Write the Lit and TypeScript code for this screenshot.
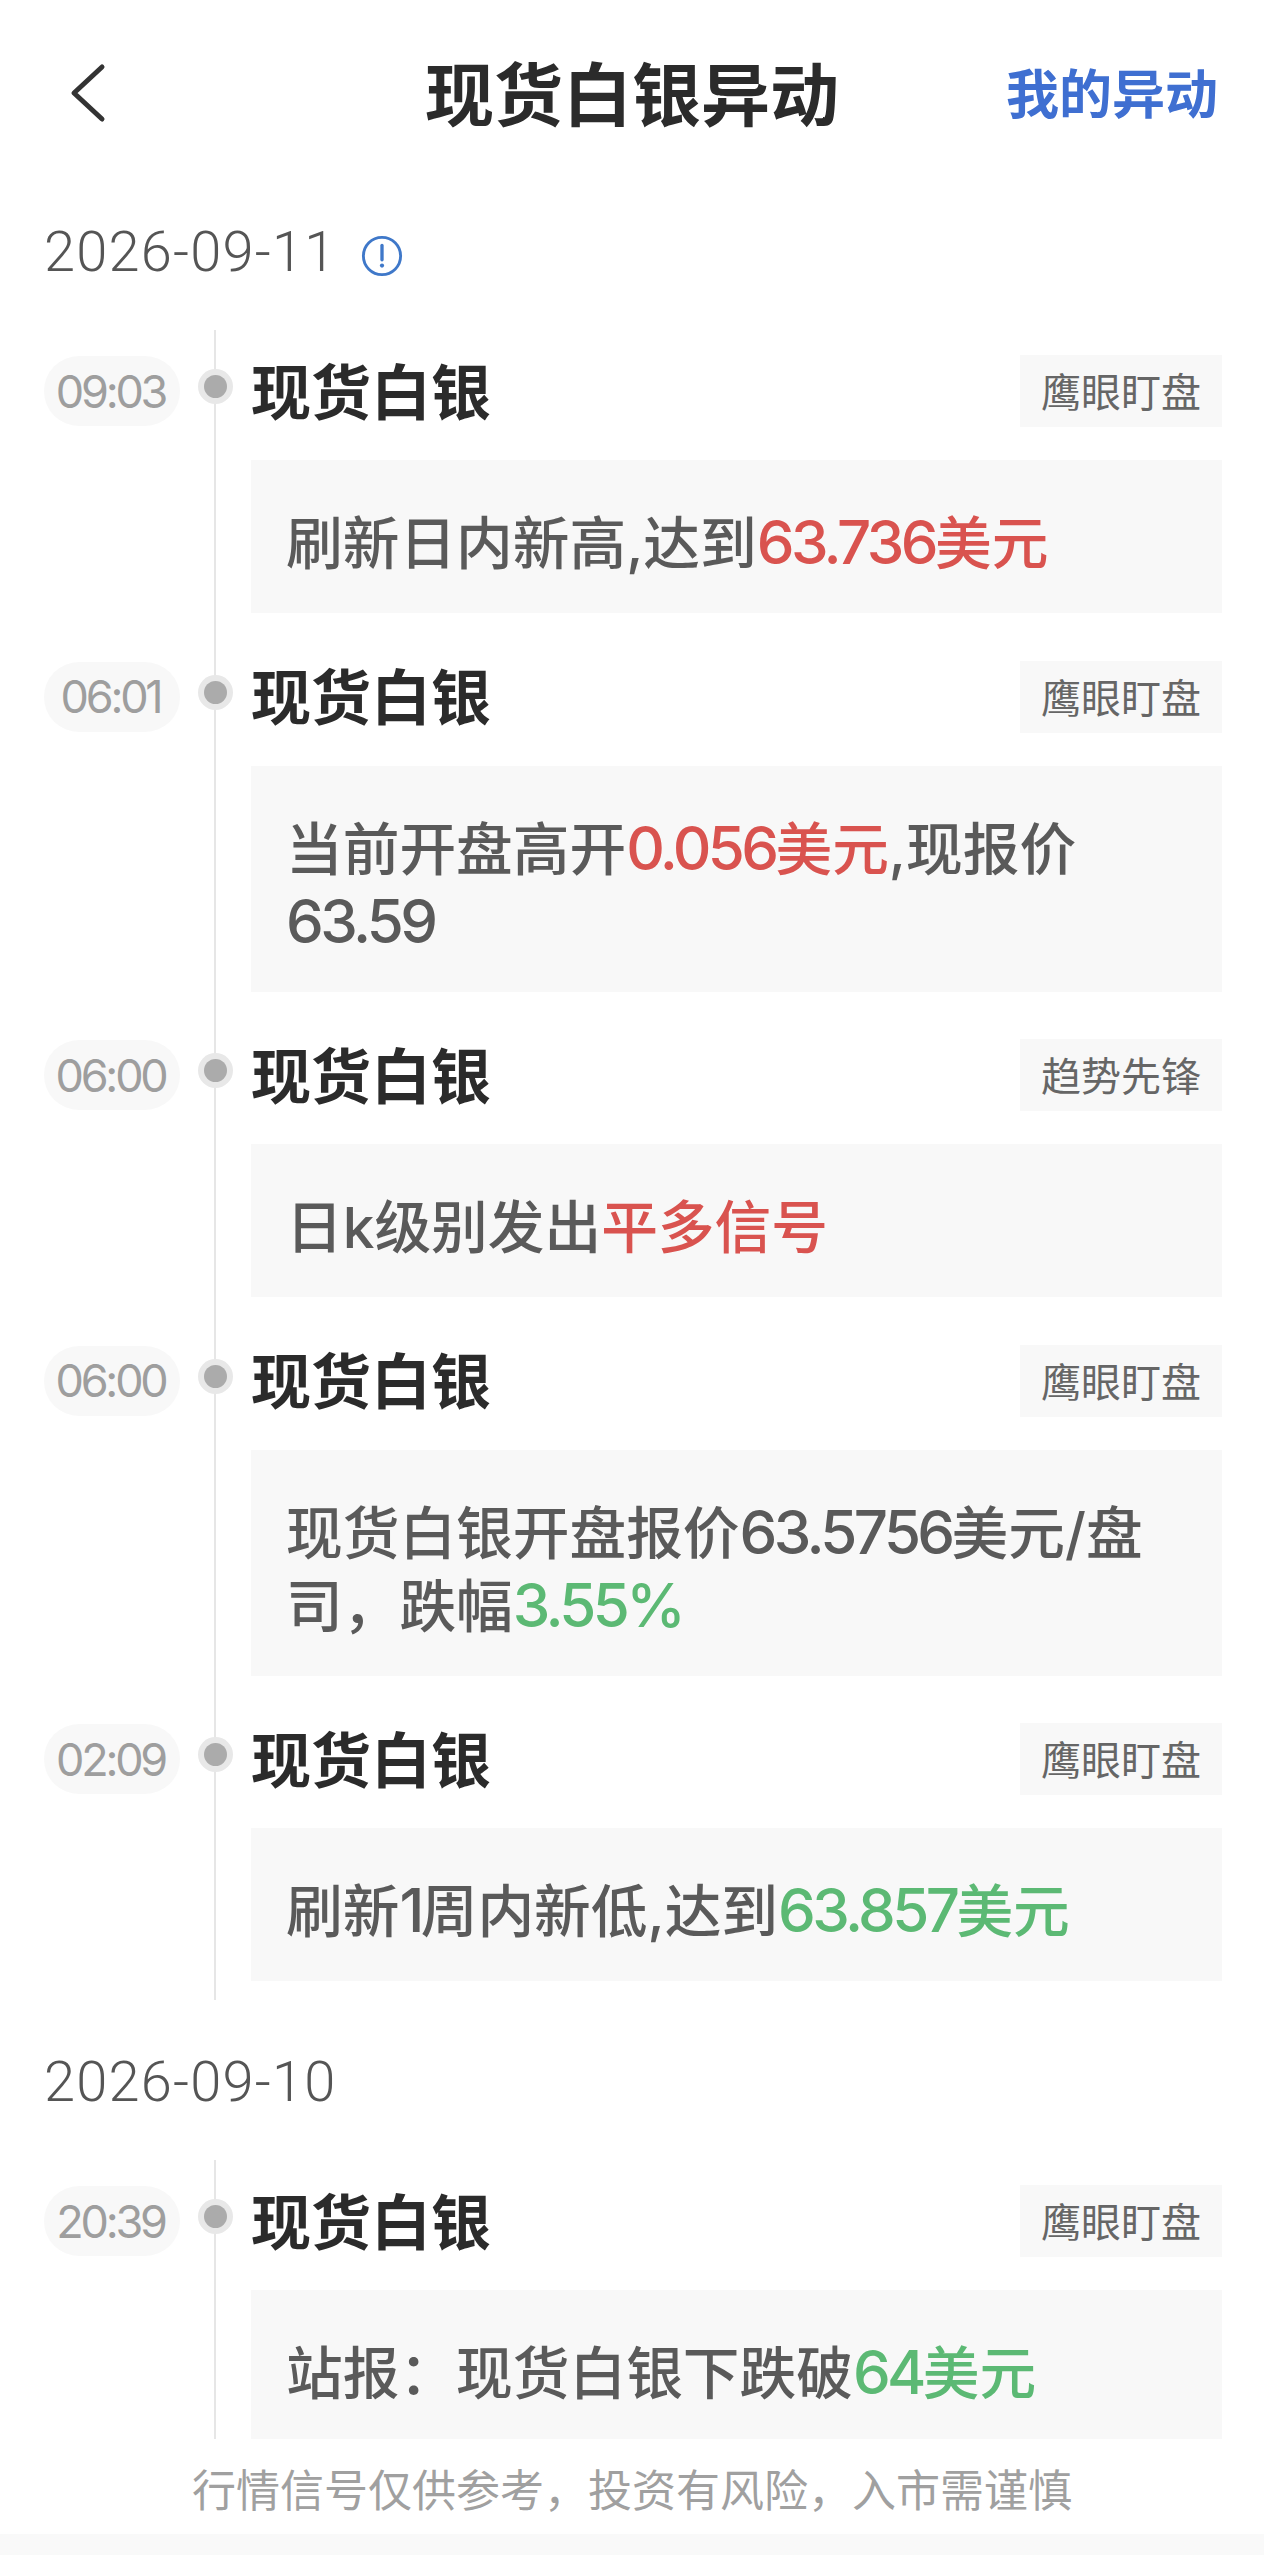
import { LitElement, html, css } from 'lit';
import { customElement } from 'lit/decorators.js';

type Part = { t: string; c?: 'up' | 'down' };
type Item = { time: string; tag: string; body: Part[] };

const day1: Item[] = [
	{ time: '09:03', tag: '鹰眼盯盘', body: [{ t: '刷新日内新高,达到' }, { t: '63.736美元', c: 'up' }] },
	{ time: '06:01', tag: '鹰眼盯盘', body: [{ t: '当前开盘高开' }, { t: '0.056美元', c: 'up' }, { t: ',现报价63.59' }] },
	{ time: '06:00', tag: '趋势先锋', body: [{ t: '日k级别发出' }, { t: '平多信号', c: 'up' }] },
	{ time: '06:00', tag: '鹰眼盯盘', body: [{ t: '现货白银开盘报价63.5756美元/盘司，跌幅' }, { t: '3.55%', c: 'down' }] },
	{ time: '02:09', tag: '鹰眼盯盘', body: [{ t: '刷新1周内新低,达到' }, { t: '63.857美元', c: 'down' }] },
];

const day2: Item[] = [
	{ time: '20:39', tag: '鹰眼盯盘', body: [{ t: '站报：现货白银下跌破' }, { t: '64美元', c: 'down' }] },
];

@customElement('app-root')
export default class AppRoot extends LitElement {

	static get styles() {
		return css`
			:host {
				display: block;
				width: 1264px;
				height: 2555px;
				background: white;
				font-family: "Inter", "Noto Sans CJK SC", sans-serif;
				overflow: hidden;
			}

			.page {
				height: 2555px;
				display: flex;
				flex-direction: column;
			}

			.header {
				flex: none;
				height: 190px;
				box-sizing: border-box;
				display: grid;
				grid-template-columns: 1fr auto 1fr;
				align-items: center;
				padding: 0 46px 8px;
			}

			.back {
				display: block;
				width: 40px;
				height: 60px;
				margin: 4px 0 0 22px;
			}

			.title {
				font-size: 69px;
				font-weight: 700;
				color: #2b2b2b;
				font-family: "Noto Sans CJK SC", sans-serif;
			}

			.mine {
				justify-self: end;
				font-size: 53px;
				font-weight: 700;
				color: #3f6fd1;
				font-family: "Noto Sans CJK SC", sans-serif;
			}

			.list {
				flex: 1;
				min-height: 0;
				overflow: hidden;
				padding: 27px 42px 0 44px;
			}

			.date {
				display: flex;
				align-items: center;
				height: 70px;
				font-family: "Roboto", sans-serif;
				font-size: 56px;
				font-weight: 300;
				letter-spacing: 1.2px;
				color: #555;
			}

			.date svg {
				width: 42px;
				height: 42px;
				margin: 8px 0 0 24px;
			}

			.group {
				position: relative;
				margin-top: 43px;
				padding-top: 25px;
				padding-bottom: 19px;
			}

			.group::before {
				content: "";
				position: absolute;
				left: 170px;
				top: 0;
				bottom: 0;
				width: 2px;
				background: #e6e6e6;
			}

			.date.second {
				margin-top: 47px;
			}

			.row {
				display: grid;
				grid-template-columns: 136px 71px 1fr;
				margin-bottom: 47.5px;
			}

			.row:last-child {
				margin-bottom: 0;
			}

			.time {
				height: 70px;
				margin-top: 1px;
				padding-right: 3px;
				border-radius: 35px;
				background: #f8f8f8;
				color: #9e9e9e;
				font-size: 45px;
				letter-spacing: -3.2px;
				display: flex;
				align-items: center;
				justify-content: center;
			}

			.dot {
				position: relative;
				justify-self: center;
				width: 23px;
				height: 23px;
				margin-top: 20px;
				border-radius: 50%;
				background: #ababab;
				box-shadow: 0 0 0 6px #e8e8e8;
			}

			.content {
				min-width: 0;
			}

			.head {
				display: flex;
				justify-content: space-between;
				align-items: center;
				height: 72px;
			}

			.name {
				margin-bottom: 6px;
				font-size: 60px;
				font-weight: 700;
				color: #2b2b2b;
				font-family: "Noto Sans CJK SC", sans-serif;
			}

			.tag {
				box-sizing: border-box;
				height: 72px;
				padding: 0 21px 2px;
				display: flex;
				align-items: center;
				background: #f8f8f8;
				font-size: 40px;
				color: #666;
				font-family: "Noto Sans CJK SC", sans-serif;
			}

			.box {
				margin-top: 33px;
				padding: 47px 36px 33px 35px;
				background: #f8f8f8;
				font-size: 56.7px;
				line-height: 73px;
				color: #5a5a5a;
				font-weight: 500;
			}

			.n {
				font-size: 60px;
				line-height: 1;
				letter-spacing: -3.6px;
			}

			.up {
				color: #d9534f;
			}

			.down {
				color: #5cb974;
			}

			.footer {
				flex: none;
				height: 116px;
				background: linear-gradient(#ffffff 0, #ffffff 95px, #f9f9f9 95px);
				text-align: center;
				color: #a0a0a0;
				font-size: 44px;
				line-height: 98px;
				font-family: "Noto Sans CJK SC", sans-serif;
			}
		`;
	}

	// digit runs sit tighter than the surrounding text
	renderText(t: string) {
		return t.split(/([\d.%]+)/).map((s, i) => (i % 2 ? html`<span class="n">${s}</span>` : s));
	}

	renderItem(item: Item) {
		return html`
			<div class="row">
				<div class="time">${item.time}</div>
				<div class="dot"></div>
				<div class="content">
					<div class="head">
						<span class="name">现货白银</span>
						<span class="tag">${item.tag}</span>
					</div>
					<div class="box">
						${item.body.map((p) => html`<span class="${p.c ?? ''}">${this.renderText(p.t)}</span>`)}
					</div>
				</div>
			</div>
		`;
	}

	render() {
		return html`
			<div class="page">
				<div class="header">
					<svg class="back" viewBox="0 0 40 60" fill="none" stroke="#333" stroke-width="5" stroke-linecap="round" stroke-linejoin="round">
						<path d="M34 4 L6 30 L34 56"></path>
					</svg>
					<div class="title">现货白银异动</div>
					<div class="mine">我的异动</div>
				</div>
				<div class="list">
					<div class="date">
						<span>2026-09-11</span>
						<svg viewBox="0 0 44 44" fill="none">
							<circle cx="22" cy="22" r="19.5" stroke="#3f78c9" stroke-width="3"></circle>
							<path d="M22 11 V26" stroke="#3f78c9" stroke-width="3.5" stroke-linecap="round"></path>
							<circle cx="22" cy="32" r="2.2" fill="#3f78c9"></circle>
						</svg>
					</div>
					<div class="group">${day1.map((i) => this.renderItem(i))}</div>
					<div class="date second"><span>2026-09-10</span></div>
					<div class="group">${day2.map((i) => this.renderItem(i))}</div>
				</div>
				<div class="footer">行情信号仅供参考，投资有风险，入市需谨慎</div>
			</div>
		`;
	}
}
